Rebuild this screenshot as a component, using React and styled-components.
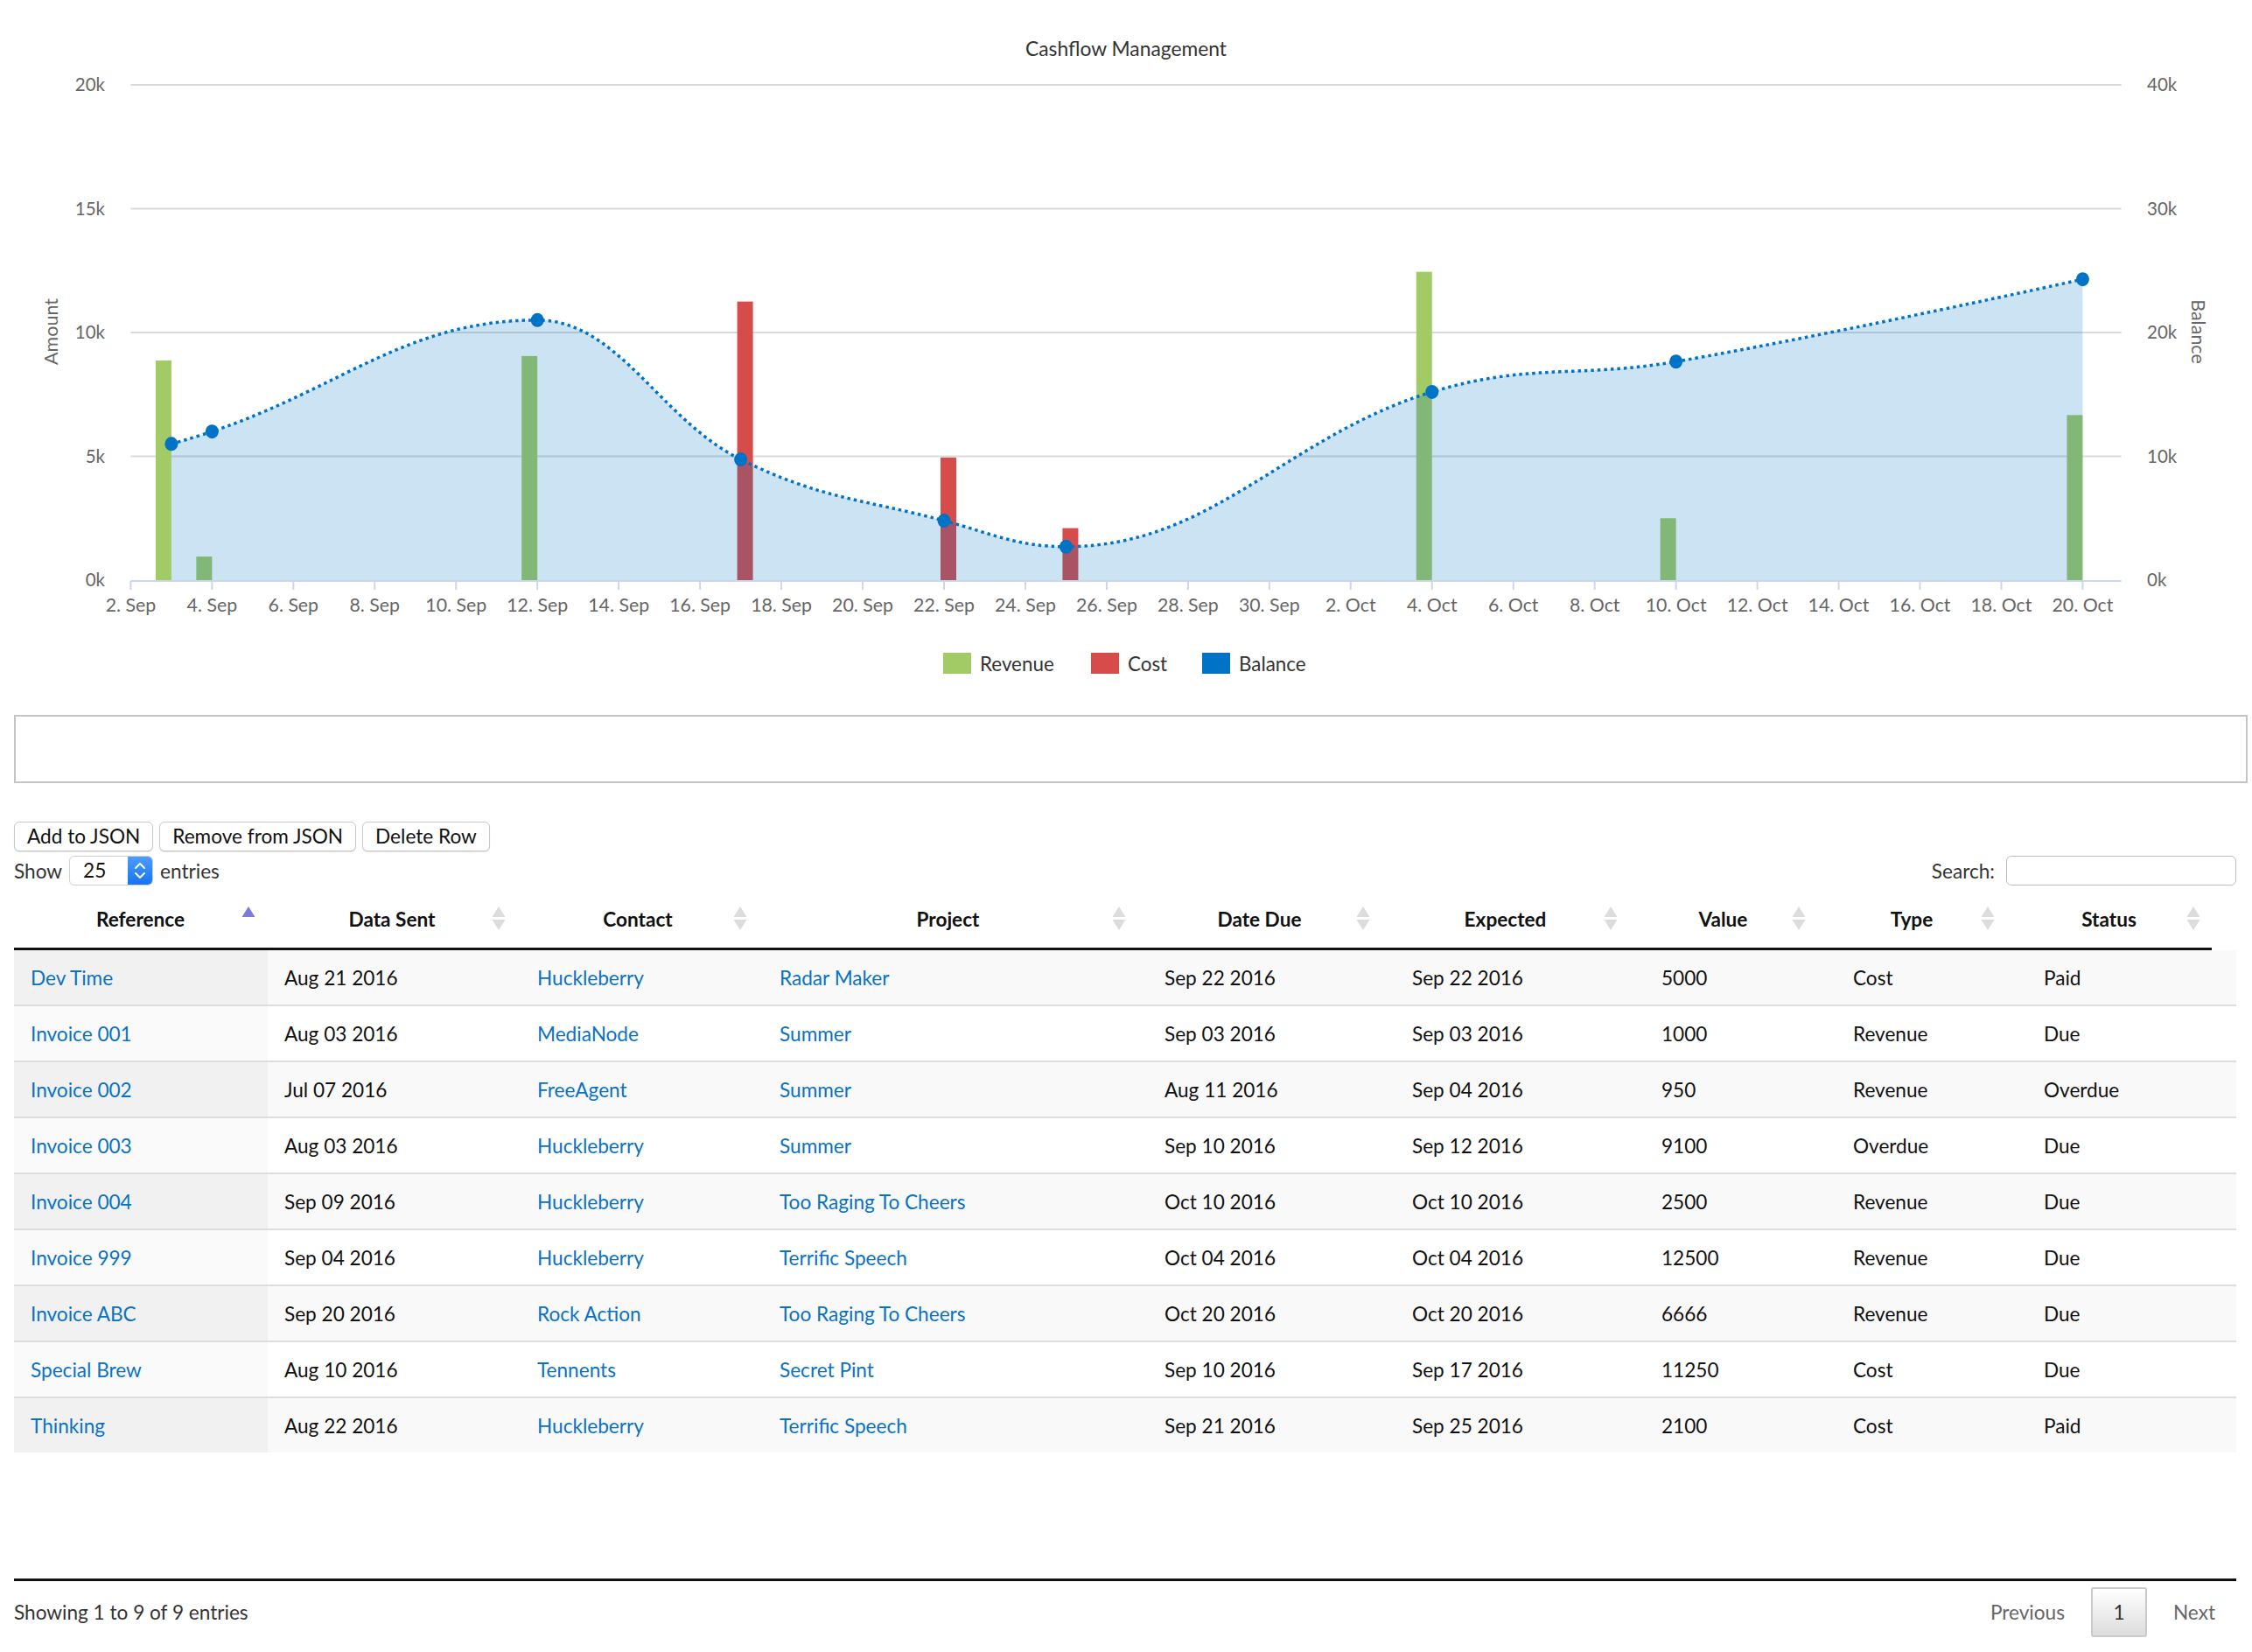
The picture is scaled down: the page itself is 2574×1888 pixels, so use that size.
import React from 'react';
import styled, { createGlobalStyle } from 'styled-components';

const GlobalStyle = createGlobalStyle`
  html, body {
    margin: 0;
    padding: 0;
    background: #fff;
  }
  body {
    font-family: Lato, "Open Sans", Arial, sans-serif;
    font-size: 22.6px;
    color: #111;
  }
`;

// chart geometry (page pixels)
const PLOT_LEFT = 149.4;
const PLOT_RIGHT = 2424.6;
const PLOT_BOTTOM = 663;
const PLOT_HEIGHT = 566;
const DAY = 46.48;
const FONT = 'Lato, "Open Sans", Arial, sans-serif';

const dayX = (d) => PLOT_LEFT + d * DAY;
const amountY = (v) => PLOT_BOTTOM - (v / 20000) * PLOT_HEIGHT;
const balanceY = (v) => PLOT_BOTTOM - (v / 40000) * PLOT_HEIGHT;

const revenue = [
  [1, 8870], [2, 950], [10, 9050], [32, 12450], [38, 2500], [48, 6666],
];
const cost = [[15, 11250], [20, 4950], [23, 2100]];
const balance = [
  [1, 11000], [2, 12000], [10, 21000], [15, 9750], [20, 4800],
  [23, 2700], [32, 15200], [38, 17650], [48, 24300],
];

const ticks = [
  '2. Sep', '4. Sep', '6. Sep', '8. Sep', '10. Sep', '12. Sep', '14. Sep',
  '16. Sep', '18. Sep', '20. Sep', '22. Sep', '24. Sep', '26. Sep', '28. Sep',
  '30. Sep', '2. Oct', '4. Oct', '6. Oct', '8. Oct', '10. Oct', '12. Oct',
  '14. Oct', '16. Oct', '18. Oct', '20. Oct',
];

const COLORS = {
  revenue: '#a2ca65',
  cost: '#d54c4b',
  balance: '#0073c6',
};

// highcharts-like spline
function splinePath(pts, smoothing = 1.5) {
  const conts = pts.map((p, i) => {
    const prev = pts[i - 1];
    const next = pts[i + 1];
    if (!prev || !next) return null;
    const den = smoothing + 1;
    let lx = (smoothing * p.x + prev.x) / den;
    let ly = (smoothing * p.y + prev.y) / den;
    const rx = (smoothing * p.x + next.x) / den;
    let ry = (smoothing * p.y + next.y) / den;
    const corr = ((ry - ly) * (rx - p.x)) / (rx - lx) + p.y - ry;
    ly += corr;
    ry += corr;
    if (ly > prev.y && ly > p.y) {
      ly = Math.max(prev.y, p.y);
      ry = 2 * p.y - ly;
    } else if (ly < prev.y && ly < p.y) {
      ly = Math.min(prev.y, p.y);
      ry = 2 * p.y - ly;
    }
    if (ry > next.y && ry > p.y) {
      ry = Math.max(next.y, p.y);
      ly = 2 * p.y - ry;
    } else if (ry < next.y && ry < p.y) {
      ry = Math.min(next.y, p.y);
      ly = 2 * p.y - ry;
    }
    return { lx, ly, rx, ry };
  });
  let d = `M ${pts[0].x} ${pts[0].y}`;
  for (let i = 1; i < pts.length; i += 1) {
    const a = conts[i - 1];
    const b = conts[i];
    const c1 = a ? `${a.rx} ${a.ry}` : `${pts[i - 1].x} ${pts[i - 1].y}`;
    const c2 = b ? `${b.lx} ${b.ly}` : `${pts[i].x} ${pts[i].y}`;
    d += ` C ${c1} ${c2} ${pts[i].x} ${pts[i].y}`;
  }
  return d;
}

const ChartSvg = styled.svg`
  display: block;
  width: 2574px;
  height: 805px;
  font-family: ${FONT};
`;

const CashflowChart = () => {
  const pts = balance.map(([d, v]) => ({ x: dayX(d), y: balanceY(v) }));
  const line = splinePath(pts);
  const area = `${line} L ${pts[pts.length - 1].x} ${PLOT_BOTTOM} L ${pts[0].x} ${PLOT_BOTTOM} Z`;
  const grid = [0, 5000, 10000, 15000, 20000];

  return (
    <ChartSvg viewBox="0 0 2574 805">
      <text x="1287" y="64" textAnchor="middle" fontSize="22.8" fill="#333">
        Cashflow Management
      </text>

      {grid.map((v, i) => (
        <g key={v}>
          {v > 0 && (
            <line x1={PLOT_LEFT} x2={PLOT_RIGHT} y1={amountY(v)} y2={amountY(v)} stroke="#dadada" strokeWidth="2" />
          )}
          <text x="120" y={amountY(v) + 7} textAnchor="end" fontSize="20.5" fill="#666">
            {`${v / 1000}k`}
          </text>
          <text x="2454" y={amountY(v) + 7} fontSize="20.5" fill="#666">
            {`${i * 10}k`}
          </text>
        </g>
      ))}

      <text transform="translate(66 379) rotate(-90)" textAnchor="middle" fontSize="21.5" fill="#666">
        Amount
      </text>
      <text transform="translate(2505 379) rotate(90)" textAnchor="middle" fontSize="21.5" fill="#666">
        Balance
      </text>

      {revenue.map(([d, v]) => (
        <rect key={`r${d}`} x={dayX(d) - 18} y={amountY(v)} width="18" height={PLOT_BOTTOM - amountY(v)} fill={COLORS.revenue} />
      ))}
      {cost.map(([d, v]) => (
        <rect key={`c${d}`} x={dayX(d) - 4} y={amountY(v)} width="18" height={PLOT_BOTTOM - amountY(v)} fill={COLORS.cost} />
      ))}

      <path d={area} fill={COLORS.balance} fillOpacity="0.2" />
      <path d={line} fill="none" stroke={COLORS.balance} strokeWidth="3.5" strokeDasharray="3.5 4" />
      {pts.map((p) => (
        <ellipse key={p.x} cx={p.x} cy={p.y} rx="7.5" ry="8" fill={COLORS.balance} />
      ))}

      <line x1={PLOT_LEFT} x2={PLOT_RIGHT} y1={PLOT_BOTTOM + 1} y2={PLOT_BOTTOM + 1} stroke="#ccd6eb" strokeWidth="2" />
      {ticks.map((t, i) => (
        <g key={t}>
          <line x1={dayX(i * 2)} x2={dayX(i * 2)} y1={PLOT_BOTTOM + 1} y2={PLOT_BOTTOM + 11} stroke="#ccd6eb" strokeWidth="2" />
          <text x={dayX(i * 2)} y="699" textAnchor="middle" fontSize="21.3" fill="#666">
            {t}
          </text>
        </g>
      ))}

      <rect x="1078" y="746" width="32" height="24" fill={COLORS.revenue} />
      <text x="1120" y="767" fontSize="22.4" fill="#333">Revenue</text>
      <rect x="1247" y="746" width="32" height="24" fill={COLORS.cost} />
      <text x="1289" y="767" fontSize="22.4" fill="#333">Cost</text>
      <rect x="1374" y="746" width="32" height="24" fill={COLORS.balance} />
      <text x="1416" y="767" fontSize="22.4" fill="#333">Balance</text>
    </ChartSvg>
  );
};

const Page = styled.div`
  width: 2574px;
`;

const Content = styled.div`
  padding: 0 18px 0 16px;
`;

const JsonBox = styled.textarea`
  display: block;
  box-sizing: border-box;
  width: 2553px;
  height: 78px;
  margin: 12px 0 0;
  border: 2px solid #c4c4c4;
  resize: none;
  font-family: inherit;
  font-size: 22px;
`;

const ButtonRow = styled.div`
  display: flex;
  gap: 7px;
  margin-top: 44px;
`;

const Button = styled.button`
  height: 34px;
  padding: 0 14px;
  background: #fff;
  border: 1.5px solid #c8c8c8;
  border-radius: 6px;
  box-shadow: 0 1px 1px rgba(0, 0, 0, 0.12);
  font-family: inherit;
  font-size: 22.6px;
  color: #111;
  line-height: 1;
`;

const Controls = styled.div`
  display: flex;
  justify-content: space-between;
  align-items: center;
  height: 38px;
  margin-top: 3px;
  color: #333;
`;

const Length = styled.div`
  display: flex;
  align-items: center;
  gap: 8px;
`;

const Select = styled.div`
  display: flex;
  box-sizing: border-box;
  width: 96px;
  height: 34px;
  border: 1.5px solid #d0d0d0;
  border-radius: 6px;
  overflow: hidden;
  color: #111;
`;

const SelectValue = styled.span`
  flex: 1;
  padding-left: 15px;
  line-height: 31px;
`;

const Stepper = styled.span`
  display: flex;
  align-items: center;
  justify-content: center;
  width: 28px;
  background: linear-gradient(#4c9dff, #1673f2);
`;

const Filter = styled.label`
  display: flex;
  align-items: center;
  gap: 13px;
`;

const SearchInput = styled.input`
  box-sizing: border-box;
  width: 263px;
  height: 34px;
  border: 1.5px solid #bdbdbd;
  border-radius: 6px;
`;

const HEAD_COLS = '289px 286px 276px 433px 279px 283px 215px 216px 235px';
const BODY_COLS = '290px 289px 277px 440px 283px 285px 219px 218px 239px';

const HeadGrid = styled.div`
  display: grid;
  grid-template-columns: ${HEAD_COLS};
  width: 2512px;
  margin-top: 3px;
  border-bottom: 3px solid #111;
`;

const HeadCell = styled.div`
  display: grid;
  grid-template-columns: 34px 1fr 34px;
  align-items: center;
  height: 66px;
  font-weight: 700;
  color: #111;
  text-align: center;
`;

const SortIcon = styled.svg`
  display: block;
  width: 16px;
  height: 30px;
  margin-left: 5px;
`;

const BodyScroll = styled.div`
  width: 2540px;
  height: 718px;
  border-bottom: 3px solid #111;
`;

const Row = styled.div`
  display: grid;
  grid-template-columns: ${BODY_COLS};
  height: 62px;
  align-items: center;
  background: ${(props) => (props.$odd ? '#f9f9f9' : '#fff')};
  & + & {
    height: 64px;
    border-top: 2px solid #ddd;
    box-sizing: border-box;
  }
`;

const Cell = styled.div`
  display: flex;
  align-items: center;
  height: 100%;
  padding: 0 19px;
  white-space: nowrap;
  color: #111;
  background: ${(props) => {
    if (!props.$sorted) return 'transparent';
    return props.$odd ? '#f1f1f1' : '#fafafa';
  }};
`;

const Link = styled.a`
  color: #0a72c2;
  text-decoration: none;
`;

const Footer = styled.div`
  display: flex;
  justify-content: space-between;
  align-items: center;
  width: 2540px;
  height: 57px;
  margin-top: 7px;
  color: #333;
`;

const Paginate = styled.div`
  display: flex;
  align-items: center;
  gap: 30px;
  padding-right: 24px;
`;

const PageLink = styled.span`
  color: #666;
`;

const PageButton = styled.span`
  display: flex;
  align-items: center;
  justify-content: center;
  box-sizing: border-box;
  width: 64px;
  height: 57px;
  border: 2px solid #cacaca;
  border-radius: 3px;
  background: linear-gradient(#fff, #dcdcdc);
  color: #333;
`;

const headers = [
  'Reference', 'Data Sent', 'Contact', 'Project', 'Date Due',
  'Expected', 'Value', 'Type', 'Status',
];

const rows = [
  ['Dev Time', 'Aug 21 2016', 'Huckleberry', 'Radar Maker', 'Sep 22 2016', 'Sep 22 2016', '5000', 'Cost', 'Paid'],
  ['Invoice 001', 'Aug 03 2016', 'MediaNode', 'Summer', 'Sep 03 2016', 'Sep 03 2016', '1000', 'Revenue', 'Due'],
  ['Invoice 002', 'Jul 07 2016', 'FreeAgent', 'Summer', 'Aug 11 2016', 'Sep 04 2016', '950', 'Revenue', 'Overdue'],
  ['Invoice 003', 'Aug 03 2016', 'Huckleberry', 'Summer', 'Sep 10 2016', 'Sep 12 2016', '9100', 'Overdue', 'Due'],
  ['Invoice 004', 'Sep 09 2016', 'Huckleberry', 'Too Raging To Cheers', 'Oct 10 2016', 'Oct 10 2016', '2500', 'Revenue', 'Due'],
  ['Invoice 999', 'Sep 04 2016', 'Huckleberry', 'Terrific Speech', 'Oct 04 2016', 'Oct 04 2016', '12500', 'Revenue', 'Due'],
  ['Invoice ABC', 'Sep 20 2016', 'Rock Action', 'Too Raging To Cheers', 'Oct 20 2016', 'Oct 20 2016', '6666', 'Revenue', 'Due'],
  ['Special Brew', 'Aug 10 2016', 'Tennents', 'Secret Pint', 'Sep 10 2016', 'Sep 17 2016', '11250', 'Cost', 'Due'],
  ['Thinking', 'Aug 22 2016', 'Huckleberry', 'Terrific Speech', 'Sep 21 2016', 'Sep 25 2016', '2100', 'Cost', 'Paid'],
];

const linkCols = [0, 2, 3];

const Sort = ({ active }) => (
  <SortIcon viewBox="0 0 16 30">
    {active ? (
      <polygon points="8,1 15.5,13 0.5,13" fill="#7b7bdc" />
    ) : (
      <>
        <polygon points="8,1 15.5,13 0.5,13" fill="#dcdcdc" />
        <polygon points="0.5,16 15.5,16 8,28" fill="#dcdcdc" />
      </>
    )}
  </SortIcon>
);

const App = () => (
  <Page>
    <GlobalStyle />
    <CashflowChart />
    <Content>
      <JsonBox />
      <ButtonRow>
        <Button type="button">Add to JSON</Button>
        <Button type="button">Remove from JSON</Button>
        <Button type="button">Delete Row</Button>
      </ButtonRow>
      <Controls>
        <Length>
          Show
          <Select>
            <SelectValue>25</SelectValue>
            <Stepper>
              <svg width="14" height="24" viewBox="0 0 14 24">
                <path d="M2 9 L7 4 L12 9 M2 15 L7 20 L12 15" fill="none" stroke="#fff" strokeWidth="2" strokeLinecap="round" strokeLinejoin="round" />
              </svg>
            </Stepper>
          </Select>
          entries
        </Length>
        <Filter>
          Search:
          <SearchInput type="search" />
        </Filter>
      </Controls>
      <HeadGrid>
        {headers.map((h, i) => (
          <HeadCell key={h}>
            <span />
            <span>{h}</span>
            <Sort active={i === 0} />
          </HeadCell>
        ))}
      </HeadGrid>
      <BodyScroll>
        {rows.map((r, ri) => (
          <Row key={r[0]} $odd={ri % 2 === 0}>
            {r.map((c, ci) => (
              <Cell key={ci} $sorted={ci === 0} $odd={ri % 2 === 0}>
                {linkCols.includes(ci) ? <Link href="#">{c}</Link> : c}
              </Cell>
            ))}
          </Row>
        ))}
      </BodyScroll>
      <Footer>
        <span>Showing 1 to 9 of 9 entries</span>
        <Paginate>
          <PageLink>Previous</PageLink>
          <PageButton>1</PageButton>
          <PageLink>Next</PageLink>
        </Paginate>
      </Footer>
    </Content>
  </Page>
);

export default App;
